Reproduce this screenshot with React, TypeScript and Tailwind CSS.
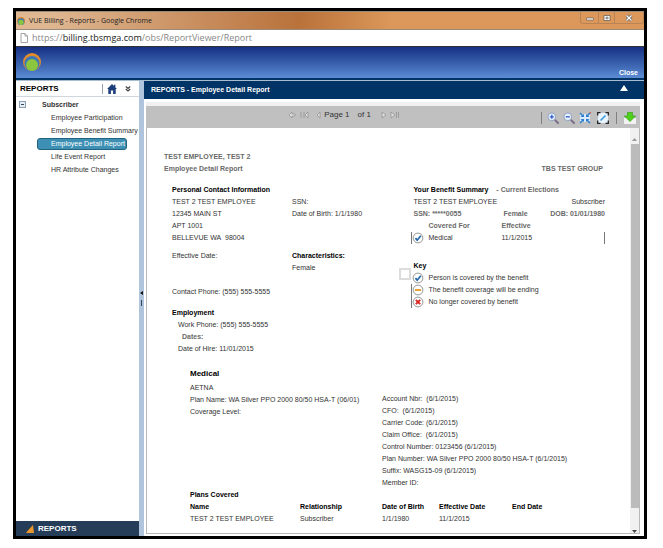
import type { ReactNode } from "react";

const reports = [
  "Employee Participation",
  "Employee Benefit Summary",
  "Employee Detail Report",
  "Life Event Report",
  "HR Attribute Changes",
];

const planDetails = [
  "Account Nbr:  (6/1/2015)",
  "CFO:  (6/1/2015)",
  "Carrier Code: (6/1/2015)",
  "Claim Office:  (6/1/2015)",
  "Control Number: 0123456 (6/1/2015)",
  "Plan Number: WA Silver PPO 2000 80/50 HSA-T (6/1/2015)",
  "Suffix: WASG15-09 (6/1/2015)",
  "Member ID:",
];

function Logo({ className }: { className: string }) {
  return (
    <svg viewBox="0 0 18 18" className={className}>
      <circle cx="9" cy="9" r="9" fill="#e08a2c" />
      <circle cx="9" cy="10.5" r="7.5" fill="#3a78b8" />
      <circle cx="9" cy="12" r="6" fill="#8cc63f" />
    </svg>
  );
}

function Magnifier({ plus }: { plus?: boolean }) {
  return (
    <svg viewBox="0 0 12 12" className="size-3">
      <path d="M7.6 7.6L11 11" stroke="#7a6f86" strokeWidth="2" strokeLinecap="round" />
      <circle cx="4.8" cy="4.8" r="3.9" fill="#e6f0fc" stroke="#93a2c2" />
      <path d={plus ? "M2.8 4.8h4M4.8 2.8v4" : "M2.8 4.8h4"} stroke="#2c5cc8" strokeWidth="1.3" />
    </svg>
  );
}

function StatusIcon({ type }: { type: "covered" | "ending" | "ended" }) {
  return (
    <svg viewBox="0 0 12 12" className="size-3 shrink-0">
      <circle cx="6" cy="6" r="4.9" fill="#fff" stroke="#8a8a8a" strokeWidth="0.9" />
      {type === "covered" && <path d="M3.4 6.2l1.8 2L8.8 3.8" fill="none" stroke="#2a6aa8" strokeWidth="1.8" />}
      {type === "ending" && <path d="M3 6h6" stroke="#e8981c" strokeWidth="1.8" />}
      {type === "ended" && <path d="M3.8 3.8l4.400 4.400M8.200 3.800L3.800 8.200" stroke="#dc2020" strokeWidth="1.800" />}
    </svg>
  );
}

function PagerButton({ label, children }: { label: string; children: ReactNode }) {
  return (
    <button type="button" aria-label={label}>
      <svg viewBox="0 0 10 8" className="h-2 w-[10px]" fill="#dedede" stroke="#8c8c8c" strokeWidth="0.7">
        {children}
      </svg>
    </button>
  );
}

function Sidebar() {
  return (
    <aside className="flex w-[123px] shrink-0 flex-col">
      <div className="flex h-4 items-center border-b border-gray-300 pl-1">
        <h2 className="flex-1 text-[8px] font-bold text-black">REPORTS</h2>
        <button type="button" aria-label="Home" className="border-l border-gray-400 pl-1">
          <svg viewBox="0 0 10 10" className="size-[10px]" fill="#1c3f7c">
            <path d="M5 0L0 5h1.3v5h2.6V6.6h2.2V10h2.6V5H10L8.4 3.4V.8H7v1.2z" />
          </svg>
        </button>
        <button type="button" aria-label="Collapse" className="mr-2 ml-2">
          <svg viewBox="0 0 6 6" className="size-[6px]" fill="none" stroke="#444" strokeWidth="1.2">
            <path d="M.8.5L3 2.5 5.2.5M.8 3L3 5 5.2 3" />
          </svg>
        </button>
      </div>
      <div className="flex flex-1 flex-col">
        <div className="mt-px flex h-[13px] items-center gap-4 pl-[3px]">
          <button type="button" aria-label="Toggle Subscriber" className="flex size-[7px] items-center justify-center border border-[#8ba0b4] bg-[#e6edf4]">
            <span className="h-px w-[3px] bg-[#345]" />
          </button>
          <span className="font-bold">Subscriber</span>
        </div>
        <nav className="mt-px flex flex-col items-start gap-px pl-[21px]">
          {reports.map((name) =>
            name === "Employee Detail Report" ? (
              <a key={name} href="#" className="h-3 rounded-[3px] border border-[#22647f] bg-[#3d90b4] pr-px pl-[13px] leading-[10px] whitespace-nowrap text-white">
                {name}
              </a>
            ) : (
              <a key={name} href="#" className="h-3 pl-[14px] whitespace-nowrap">
                {name}
              </a>
            )
          )}
        </nav>
      </div>
      <div className="flex h-[15px] items-center gap-1 bg-[#263d5a] pl-[10px]">
        <svg viewBox="0 0 8 8" className="size-2">
          <path d="M0 8C2 5 5 2 7 0l1 8z" fill="#e8982c" />
        </svg>
        <span className="text-[8px] font-bold text-white">REPORTS</span>
      </div>
    </aside>
  );
}

function Toolbar() {
  return (
    <div className="flex h-[22px] shrink-0 items-center bg-[#c0c0c0] pr-1">
      <div className="flex flex-1 items-center justify-center pb-1 text-[8px]">
        <PagerButton label="Refresh">
          <path d="M2 4l3-3v2h3v2H5v2z" />
        </PagerButton>
        <span className="w-[2px]" />
        <PagerButton label="First page">
          <path d="M2 1v6M5 1v6M9 1L6 4l3 3z" />
        </PagerButton>
        <span className="w-1" />
        <PagerButton label="Previous page">
          <path d="M7 1L4 4l3 3z" />
        </PagerButton>
        <span className="mr-2 ml-px">Page 1</span>
        <span className="mr-2">of 1</span>
        <PagerButton label="Next page">
          <path d="M3 1l4 3-4 3z" />
        </PagerButton>
        <span className="w-px" />
        <PagerButton label="Last page">
          <path d="M1 1l4 3-4 3zM6.500 1v6M8.500 1v6" />
        </PagerButton>
      </div>
      <div className="flex items-center gap-1 pt-[2px]">
        <span className="mr-px h-3 w-px bg-[#808080]" />
        <button type="button" aria-label="Zoom in"><Magnifier plus /></button>
        <button type="button" aria-label="Zoom out"><Magnifier /></button>
        <button type="button" aria-label="Fit width">
          <svg viewBox="0 0 12 12" className="size-3">
            <path d="M1 2h10v8H1z" fill="#d8ebfc" />
            <path d="M1 1l3.500 3.500M11 1L7.500 4.500M1 11l3.500-3.500M11 11L7.500 7.500" stroke="#2f7cc8" strokeWidth="1.500" />
            <path d="M5 2v3H1.500zM7 2v3h3.500zM5 10V7H1.500zM7 10V7h3.500z" fill="#2f7cc8" />
            <path d="M10 0h2v2z" fill="#d86a5a" />
          </svg>
        </button>
        <button type="button" aria-label="Full page" className="ml-[2px]">
          <svg viewBox="0 0 12 12" className="size-3">
            <path d="M1 1h10v10H1z" fill="#e8f4ff" />
            <path d="M.7 3.500V.7h2.800M8.500.7h2.800v2.800M11.300 8.500v2.800H8.500M3.500 11.300H.7V8.500" fill="none" stroke="#222" strokeWidth="1.300" />
            <path d="M3.500 8.500l5-5" stroke="#3f9ada" strokeWidth="1.600" />
          </svg>
        </button>
        <span className="mx-[3px] h-3 w-px bg-[#808080]" />
        <button type="button" aria-label="Download">
          <svg viewBox="0 0 12 12" className="size-3">
            <path d="M0 6h12v6H0z" fill="#f2f2f2" />
            <path d="M3.500.3h5V4h3.200L6 9.500.3 4h3.200z" fill="#4fd01c" stroke="#2c9c14" strokeWidth="0.600" />
          </svg>
        </button>
      </div>
    </div>
  );
}

function Report() {
  return (
    <article className="min-w-0 flex-1 pt-[23px] pr-[25px] pl-[17px]">
      <header className="flex items-end justify-between font-bold text-[#6a6a6a]">
        <div>
          <p>TEST EMPLOYEE, TEST 2</p>
          <p>Employee Detail Report</p>
        </div>
        <p className="pr-[2px]">TBS TEST GROUP</p>
      </header>

      <div className="mt-[9px] flex justify-between pl-2">
        <section className="w-[228px]">
          <h3 className="font-bold text-black">Personal Contact Information</h3>
          <div className="grid grid-cols-[120px_1fr]">
            <div>
              <p>TEST 2 TEST EMPLOYEE</p>
              <p>12345 MAIN ST</p>
              <p>APT 1001</p>
              <p>BELLEVUE WA&nbsp; 98004</p>
            </div>
            <div>
              <p>SSN:</p>
              <p>Date of Birth: 1/1/1980</p>
            </div>
            <p className="mt-[6px]">Effective Date:</p>
            <div className="mt-[6px]">
              <p className="font-bold text-black">Characteristics:</p>
              <p>Female</p>
            </div>
          </div>
          <p className="mt-3">Contact Phone: (555) 555-5555</p>
          <h3 className="mt-[9px] font-bold text-black">Employment</h3>
          <div className="pl-[6px]">
            <p>Work Phone: (555) 555-5555</p>
            <p className="pl-1 font-bold text-[#6a6a6a]">Dates:</p>
            <p>Date of Hire: 11/01/2015</p>
          </div>
        </section>

        <section className="w-[206px]">
          <div className="pl-[14px]">
            <h3 className="font-bold text-black">
              Your Benefit Summary <span className="ml-[6px] text-[#6a6a6a]">- Current Elections</span>
            </h3>
            <div className="flex justify-between">
              <span>TEST 2 TEST EMPLOYEE</span>
              <span>Subscriber</span>
            </div>
            <div className="flex justify-between font-bold text-[#6a6a6a]">
              <span className="w-[90px]">SSN: *****0055</span>
              <span className="flex-1">Female</span>
              <span>DOB: 01/01/1980</span>
            </div>
            <div className="grid grid-cols-[73px_1fr] pl-[15px] font-bold text-[#6a6a6a]">
              <span>Covered For</span>
              <span>Effective</span>
            </div>
          </div>
          <div className="ml-3 grid grid-cols-[16px_73px_1fr] border-x border-[#777]">
            <StatusIcon type="covered" />
            <span>Medical</span>
            <span>11/1/2015</span>
          </div>
          <h3 className="mt-4 pl-[14px] font-bold text-black">Key</h3>
          <div className="flex">
            <input type="checkbox" aria-label="Select key" className="mt-[-4px] size-3 appearance-none border-2 border-[#dcdcdc] bg-white" />
            <ul>
              <li className="flex gap-1 border-l border-white"><StatusIcon type="covered" />Person is covered by the benefit</li>
              <li className="flex gap-1 border-l border-[#777]"><StatusIcon type="ending" />The benefit coverage will be ending</li>
              <li className="flex gap-1 border-l border-[#777]"><StatusIcon type="ended" />No longer covered by benefit</li>
            </ul>
          </div>
        </section>
      </div>

      <section className="mt-[13px] pl-[26px]">
        <h3 className="text-[8px] font-bold text-black">Medical</h3>
        <div className="mt-[2px] grid grid-cols-[192px_1fr]">
          <div>
            <p>AETNA</p>
            <p>Plan Name: WA Silver PPO 2000 80/50 HSA-T (06/01)</p>
            <p>Coverage Level:</p>
          </div>
          <ul className="pt-[11px]">
            {planDetails.map((line) => (
              <li key={line} className="whitespace-pre">{line}</li>
            ))}
          </ul>
        </div>
        <table className="w-[380px] table-fixed text-left">
          <caption className="text-left font-bold text-black">Plans Covered</caption>
          <thead className="text-black">
            <tr>
              <th className="w-[110px]">Name</th>
              <th className="w-[82px]">Relationship</th>
              <th className="w-[57px]">Date of Birth</th>
              <th className="w-[73px]">Effective Date</th>
              <th>End Date</th>
            </tr>
          </thead>
          <tbody>
            <tr>
              <td>TEST 2 TEST EMPLOYEE</td>
              <td>Subscriber</td>
              <td>1/1/1980</td>
              <td>11/1/2015</td>
              <td />
            </tr>
          </tbody>
        </table>
      </section>
    </article>
  );
}

export default function App() {
  return (
    <div className="min-h-screen bg-white pt-2 pr-4 pb-[9px] pl-[13px] font-['Liberation_Sans',Arial,sans-serif] text-[7px] leading-3 text-[#333]">
      <div className="flex min-h-[531px] flex-col border-[3px] border-black">
        <div className="flex h-[19px] shrink-0 justify-between border-t border-b border-[#9a8a7a] bg-linear-to-r from-[#dfb892] from-5% via-[#b9723a] via-45% to-[#dc985a] to-60% pl-px font-['Open_Sans',sans-serif]">
          <div className="flex items-center gap-1 text-[7px] text-[#222]">
            <Logo className="size-2" />
            VUE Billing - Reports - Google Chrome
          </div>
          <div className="flex h-3 rounded-b-[3px] border border-t-0 border-[#b98455] text-white">
            <button type="button" aria-label="Minimize" className="flex w-[17px] items-center justify-center">
              <svg viewBox="0 0 8 8" className="size-2"><path d="M.5 4h7v2h-7z" fill="#fff" stroke="#555" strokeWidth=".6" /></svg>
            </button>
            <button type="button" aria-label="Maximize" className="flex w-[17px] items-center justify-center border-x border-[#b98455]">
              <svg viewBox="0 0 8 8" className="size-2"><path d="M1 1.500h6v5H1zM3 3.200h2v1.600H3z" fill="#fff" stroke="#555" strokeWidth=".7" /></svg>
            </button>
            <button type="button" aria-label="Close window" className="flex w-7 items-center justify-center">
              <svg viewBox="0 0 8 8" className="size-2"><path d="M1.500 1.500l5 5M6.500 1.500l-5 5" stroke="#555" strokeWidth="2.600" /><path d="M1.500 1.500l5 5M6.500 1.500l-5 5" stroke="#fff" strokeWidth="1.400" /></svg>
            </button>
          </div>
        </div>
        <div className="flex h-4 shrink-0 items-center gap-1 pl-1 font-['Open_Sans',sans-serif] text-[9px] text-[#888]">
          <svg viewBox="0 0 8 10" className="h-[10px] w-2" fill="#fff" stroke="#999" strokeWidth="0.9">
            <path d="M1 .5h4l2.500 2.500v6.500H1zM5 .5V3h2.500" />
          </svg>
          <span>https://<span className="text-[#222]">billing.tbsmga.com</span>/obs/ReportViewer/Report</span>
        </div>
        <header className="flex h-[34px] shrink-0 items-start justify-between border-t border-b-2 border-t-[#333] border-b-[#003366] bg-linear-to-b from-[#172f82] to-[#5c8cd4] pr-[6px] pl-[7px]">
          <Logo className="mt-[6px] size-[18px]" />
          <a href="#" className="mt-5 font-bold text-white">Close</a>
        </header>

        <div className="flex flex-1 border-t border-[#a9bcd0]">
          <Sidebar />
          <div className="flex w-[5px] shrink-0 flex-col items-center justify-center gap-[5px] bg-[#b0c4de] pb-5">
            <svg viewBox="0 0 3 4" className="h-1 w-[3px]"><path d="M3 0v4L0 2z" fill="#111" /></svg>
            <span className="h-[6px] w-px bg-[#345]" />
          </div>
          <main className="flex min-w-0 flex-1 flex-col">
            <div className="flex h-[18px] shrink-0 items-center justify-between bg-[#003366] pr-4 pl-[7px]">
              <h1 className="font-bold text-white">REPORTS - Employee Detail Report</h1>
              <button type="button" aria-label="Collapse panel" className="mb-1">
                <svg viewBox="0 0 8 6" className="h-[6px] w-2"><path d="M4 0l4 6H0z" fill="#fff" /></svg>
              </button>
            </div>
            <div className="flex flex-1 flex-col pt-[3px] pr-1 pb-[2px] pl-[2px]">
              <div className="h-1 shrink-0 bg-[#f0f0f0]" />
              <Toolbar />
              <div className="flex flex-1 border border-t-0 border-[#b8b8b8]">
                <Report />
                <div className="flex w-[9px] shrink-0 flex-col items-center bg-[#f1f1f1]">
                  <svg viewBox="0 0 9 16" className="h-4 w-[9px]"><path d="M4.500 10L7 13H2z" fill="#999" /></svg>
                  <div className="w-2 flex-1 bg-[#bcbcbc]" />
                  <svg viewBox="0 0 9 25" className="h-[25px] w-[9px]"><path d="M2 22h5l-2.500 3z" fill="#444" /></svg>
                </div>
              </div>
            </div>
          </main>
        </div>
      </div>
    </div>
  );
}
